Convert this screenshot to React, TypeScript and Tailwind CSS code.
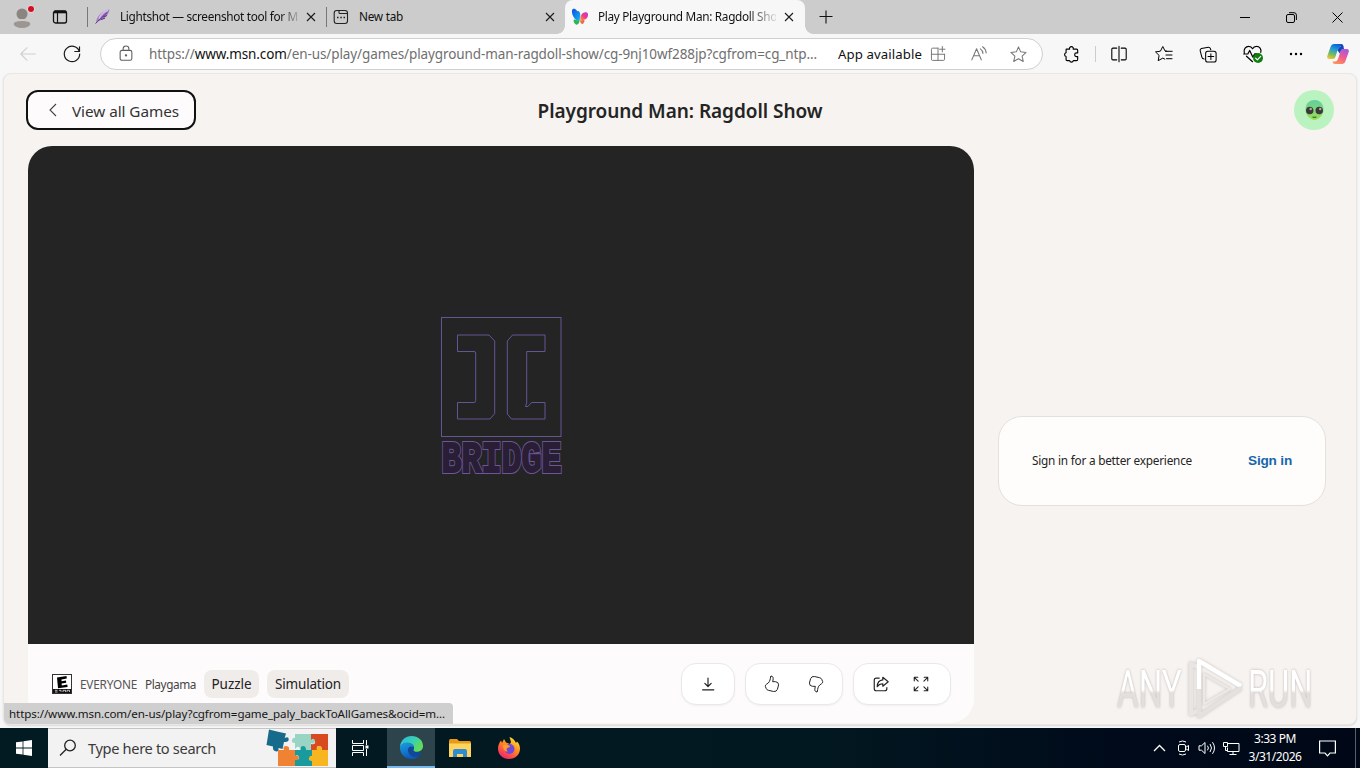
import { useLayoutEffect, useRef, useState } from "react";
import type { ReactNode } from "react";

const UI = "font-['Noto_Sans',sans-serif]";

/* Single-line label whose tracking is tuned so the text spans exactly `w` pixels. */
function Label({ w, className = "", children }: { w: number; className?: string; children: ReactNode }) {
  const ref = useRef<HTMLSpanElement>(null);
  const [spacing, setSpacing] = useState(0);
  useLayoutEffect(() => {
    const el = ref.current;
    if (!el) return;
    const n = (el.textContent || "").length;
    setSpacing((w - el.getBoundingClientRect().width) / n);
  }, [w]);
  return (
    <span ref={ref} className={`inline-block shrink-0 whitespace-pre ${className}`} style={{ letterSpacing: `${spacing}px` }}>
      {children}
    </span>
  );
}

function Slot({ className = "", children }: { className?: string; children: ReactNode }) {
  return <div className={`flex shrink-0 items-center justify-center ${className}`}>{children}</div>;
}

function Ico({ s = 20, className = "", sw = 1, children }: { s?: number; className?: string; sw?: number; children: ReactNode }) {
  return (
    <svg width={s} height={s} viewBox="0 0 20 20" fill="none" stroke="currentColor" strokeWidth={sw} strokeLinecap="round" strokeLinejoin="round" className={`shrink-0 ${className}`}>
      {children}
    </svg>
  );
}

const Close = () => (
  <svg width="10" height="10" viewBox="0 0 10 10" stroke="#1b1b1b" strokeWidth="1.1" className="shrink-0"><path d="M1 1l8 8M9 1L1 9" /></svg>
);

function Butterfly() {
  return (
    <svg width="18" height="18" viewBox="0 0 18 18">
      <defs>
        <linearGradient id="bf1" x1="0" y1="0" x2="1" y2="1"><stop stopColor="#0a4fe0" /><stop offset="1" stopColor="#18b4f4" /></linearGradient>
        <linearGradient id="bf2" x1="1" y1="0" x2="0" y2="1"><stop stopColor="#b43be0" /><stop offset=".5" stopColor="#f0388c" /><stop offset="1" stopColor="#ff9a3c" /></linearGradient>
      </defs>
      <path d="M1 2.500C1.200.8 3 .3 4.500 1.200C5.500 1.800 5.800 2.500 6.200 3.200C8 2.500 9.300 4.500 9.300 7C9.300 9 9 10.500 8.600 12C7 12.800 4.500 12 3.200 10C1.500 7.500.7 4.700 1 2.500z" fill="url(#bf1)" />
      <path d="M3 11.300c2 .9 4 1 5.700.7c-.2 2.500-1.200 4.700-3 4.700S1.800 13.500 3 11.300z" fill="#2fb457" />
      <path d="M9.300 12C9 8.500 10.800 4.500 14.500 4.300c2.800 0 3 2.500 2.100 4.700c-1 2-2.500 2.500-3.300 2.500c-1.300.8-2.700.9-4 .5z" fill="url(#bf2)" />
      <path d="M9.300 12c1.500.6 3 .2 4-.4c.6 1.900-.3 4.300-2 4.300s-2.300-1.900-2-3.900z" fill="#f36b45" />
    </svg>
  );
}

function TabStrip() {
  return (
    <div className="flex h-[34px] w-full items-stretch bg-[#cccccc] text-[#111]">
      <Slot className="w-[44px]">
        <svg width="26" height="28" viewBox="0 0 26 28">
          <circle cx="13" cy="11" r="5.500" fill="#8b8581" />
          <ellipse cx="13" cy="21" rx="8.300" ry="4" fill="#9c9692" />
          <path d="M5 18.500Q13 15.500 21 18.500" stroke="#cccccc" strokeWidth="1.800" fill="none" />
          <circle cx="22" cy="6" r="3.800" fill="#e8d8d8" />
          <circle cx="22" cy="6" r="3" fill="#d01023" />
        </svg>
      </Slot>
      <Slot className="w-[32px]">
        <svg width="16" height="16" viewBox="0 0 16 16" fill="none" stroke="#111"><rect x="1.500" y="2" width="13" height="12" rx="2" strokeWidth="1.300" /><path d="M2 3h12" strokeWidth="2.600" /><path d="M5.500 4v10" strokeWidth="1.200" /></svg>
      </Slot>
      <Slot className="ml-[11px] w-px"><div className="h-5 w-px bg-[#777]" /></Slot>
      <div className="flex w-[238px] items-center pl-[6px]">
        <svg width="18" height="18" viewBox="0 0 18 18">
          <path d="M2 14.500C2.500 9 7 3 15.500 1.500C15 6 11 12 3.500 13z" fill="#a37cc4" />
          <path d="M5 10.500C6.500 7 10 3.500 14 2.500" stroke="#d8bfe8" strokeWidth="1.500" fill="none" />
          <path d="M1.500 15.500L13.500 4.200M7 11.500l4-1.300M9 9l4-1.500" stroke="#5b3587" strokeWidth="1" fill="none" />
        </svg>
        <div className="ml-[8px] flex w-[178px] [mask-image:linear-gradient(to_right,#000_90%,transparent_102%)]">
          <Label w={178} className="text-[11.8px]">Lightshot — screenshot tool for M</Label>
        </div>
        <span className="ml-[8px] flex"><Close /></span>
      </div>
      <Slot className="w-px"><div className="h-5 w-px bg-[#777]" /></Slot>
      <div className="flex w-[238px] items-center pl-[6px]">
        <svg width="16" height="16" viewBox="0 0 16 16" fill="none" stroke="#222" strokeWidth="1.100"><rect x="1.200" y="1.500" width="13.300" height="13" rx="2.500" /><path d="M6 1.500v2.200q0 .8.800.8h7.700" /><path d="M4 8.500h1.500M7.300 8.500h1.500M10.500 8.500h1.500" strokeWidth="1.500" /></svg>
        <Label w={44} className="ml-[10px] text-[11.8px]">New tab</Label>
        <span className="ml-[142px] flex"><Close /></span>
      </div>
      <div className="relative flex w-[240px] items-center rounded-t-[8px] bg-[#f7f7f7] pl-[6px] before:absolute before:bottom-0 before:-left-[8px] before:size-2 before:bg-[radial-gradient(circle_at_0_0,transparent_7.500px,#f7f7f7_8px)] before:content-[''] after:absolute after:-right-[8px] after:bottom-0 after:size-2 after:bg-[radial-gradient(circle_at_100%_0,transparent_7.500px,#f7f7f7_8px)] after:content-['']">
        <Butterfly />
        <div className="ml-[9px] flex w-[178px] [mask-image:linear-gradient(to_right,#000_84%,transparent_102%)]">
          <Label w={179} className="text-[11.8px]">Play Playground Man: Ragdoll Sho</Label>
        </div>
        <span className="ml-[8px] flex"><Close /></span>
      </div>
      <Slot className="ml-px w-[40px]"><svg width="14" height="14" viewBox="0 0 14 14" stroke="#111" strokeWidth="1.100"><path d="M7 .5v13M.5 6.500h13" /></svg></Slot>
      <div className="ml-auto flex">
        <Slot className="w-[46px]"><svg width="10" height="10" stroke="#000"><path d="M0 5.500h10" /></svg></Slot>
        <Slot className="w-[46px]"><svg width="11" height="11" viewBox="0 0 11 11" fill="none" stroke="#000"><rect x=".5" y="2.500" width="8" height="8" rx="1.500" /><path d="M3 .7h5q2.400 0 2.400 2.400V8" /></svg></Slot>
        <Slot className="w-[46px]"><svg width="11" height="11" viewBox="0 0 11 11" stroke="#000"><path d="M.5.5l10 10M10.500.5l-10 10" /></svg></Slot>
      </div>
    </div>
  );
}

function Toolbar() {
  return (
    <div className="flex h-[39px] w-full items-center bg-[#f7f7f7] pt-px text-[#222]">
      <Slot className="ml-[6px] w-[44px]"><Ico s={18} className="text-[#cfcfcf]" sw={1.200}><path d="M18 10H2M9 3L2 10l7 7" /></Ico></Slot>
      <Slot className="w-[44px]"><Ico className="text-[#1b1b1b]" sw={1.200}><path d="M17.200 7.200A7.700 7.700 0 1 0 17.700 10M17.500 2.800v4.700h-4.700" /></Ico></Slot>
      <div className="ml-[6px] flex h-8 w-[943px] items-center rounded-full border border-[#cfcfcf] bg-white">
        <Slot className="w-[50px]"><Ico s={18} className="text-[#5f5f5f]" sw={1.200}><rect x="3.500" y="6" width="13" height="11" rx="2" /><path d="M6.800 6V4.300a3.200 3.200 0 0 1 6.400 0V6" /><circle cx="10" cy="11.500" r=".7" fill="currentColor" /></Ico></Slot>
        <div className="ml-[-2px] flex w-[689px] text-[13.5px] text-[#6f6f6f]">
          <Label w={668}>https://<span className="text-[#111]">www.msn.com</span>/en-us/play/games/playground-man-ragdoll-show/cg-9nj10wf288jp?cgfrom=cg_ntp...</Label>
        </div>
        <Label w={84} className="pt-px text-[13.2px] text-[#111]">App available</Label>
        <Slot className="ml-[5px] w-[22px] text-[#777]"><Ico s={18} sw={1.100}><path d="M10 3.500H4Q2.700 3.500 2.700 4.800v11q0 1.300 1.300 1.300h12q1.300 0 1.300-1.300V10.300M2.700 10.300h14.600M10 3.500v13.600M14.800 1.700v6M11.800 4.700h6" /></Ico></Slot>
        <Slot className="ml-[15px] w-[30px] text-[#777]"><Ico s={18} sw={1.200}><path d="M2 16.500L7.300 4.200 12.600 16.500M3.900 12h6.800" /><path d="M11.500 4.300q2.500 1.600 2.900 5M14 2q3.500 2.300 4 6.800" /></Ico></Slot>
        <Slot className="ml-[9px] w-[30px] text-[#777]"><Ico s={19} sw={1.100}><path d="M10 2l2.300 5.200 5.700.6-4.200 3.900 1.200 5.600-5-2.900-5 2.900 1.200-5.600L2 7.800l5.700-.6z" /></Ico></Slot>
      </div>
      <Slot className="ml-[8px] w-[40px]"><Ico s={19} className="text-black" sw={1.200}><path d="M4.800 4.300h3.200a2 2 0 1 1 3.800 0h3.500q1.200 0 1.200 1.200v2.800h-1.200a1.900 1.900 0 0 0 0 3.900h1.200v3.100q0 1.200-1.200 1.200h-3.400a2 2 0 0 1-3.900 0H5.500q-1.200 0-1.200-1.200v-3.200a2 2 0 0 1 0-3.900V5q0-.7.500-.7z" /></Ico></Slot>
      <div className="ml-[4px] h-4 w-px bg-[#ccc]" />
      <Slot className="ml-[1px] w-[44px]"><Ico s={18} className="text-black" sw={1.200}><path d="M7.500 3.500H3.200Q2 3.500 2 4.700v10.600q0 1.200 1.200 1.200h4.300M12.500 3.500h4.300Q18 3.500 18 4.700v10.600q0 1.200-1.200 1.200h-4.300M10 1.500v17" /></Ico></Slot>
      <Slot className="ml-px w-[44px]"><Ico s={20} className="text-black" sw={1}><path d="M12.800 7.200L11 6.900 8.800 2.500 6.400 7.200 1.500 7.900l3.600 3.500-.9 5.300 4.600-2.600 2 1M11.500 7.300h6.700M12 11h6M12.500 14.700h5.500" /></Ico></Slot>
      <Slot className="w-[44px]"><Ico s={19} className="text-black" sw={1.100}><path d="M5.500 14.700Q3.500 14.700 3 12.800L1.200 6Q1 4.300 2.600 3.800L9.900 2.300Q11.500 2.200 12 3.800L12.400 5" /><rect x="7" y="6.500" width="11" height="11.500" rx="2.200" /><path d="M12.500 9.200v6M9.500 12.200h6" /></Ico></Slot>
      <Slot className="w-[44px]"><Ico s={22} className="text-black" sw={1.100}><path d="M3 9.200C2 5.500 4.500 3 7.200 3.100Q9.300 3.100 10.500 5.200 11.700 3.100 14 3.100C16.800 3 18.800 5.500 18 8.500M2.500 10h3.700l1.700-3.200 2.800 6 1.800-3h2M5 12l5.500 5" /><circle cx="15.500" cy="13.700" r="4.500" fill="#107c10" stroke="none" /><path d="M13.300 13.800l1.600 1.600 3-3.200" stroke="#fff" /></Ico></Slot>
      <Slot className="w-[44px]"><svg width="14" height="4"><circle cx="2" cy="2" r="1.200" /><circle cx="7" cy="2" r="1.200" /><circle cx="12" cy="2" r="1.200" /></svg></Slot>
      <Slot className="w-[40px]">
        <svg width="24" height="22" viewBox="0 0 24 22">
          <defs>
            <linearGradient id="cp1" x1=".6" y1="0" x2=".2" y2="1"><stop stopColor="#0b5fd6" /><stop offset=".35" stopColor="#1f9ade" /><stop offset=".65" stopColor="#66b86a" /><stop offset="1" stopColor="#f4c430" /></linearGradient>
            <linearGradient id="cp2" x1=".8" y1="0" x2=".3" y2="1"><stop stopColor="#a457e8" /><stop offset=".5" stopColor="#ee5a92" /><stop offset="1" stopColor="#ff9257" /></linearGradient>
          </defs>
          <path d="M15 1H8Q5.500 1 4.500 4L1.300 13Q.5 16 3.500 16H7q1.800 0 2.500-2.500L12 6q1-2.500 3-2.500h2.500Q17 1 15 1z" fill="url(#cp1)" />
          <path d="M9 21h7q2.500 0 3.500-3l3.200-9q.8-3-2.200-3H17q-1.800 0-2.500 2.500L12 16q-1 2.500-3 2.500H6.500Q7 21 9 21z" fill="url(#cp2)" />
          <path d="M15 1q1.900.1 2.400 2l.6 3H17q-1.800 0-2.500 2.500L13.800 10.500 11.600 7.500 12 6q1-2.500 3-2.500z" fill="#1845b8" />
        </svg>
      </Slot>
    </div>
  );
}

function BridgeLogo() {
  return (
    <svg width="126" height="162" viewBox="438 315 126 162" fill="none" stroke="#665596" strokeWidth="1" className="overflow-visible">
      <rect x="441.500" y="317.500" width="119.500" height="119" />
      <path d="M457.500 335H489L494.700 341V413.500L490 419H457.500V402.500H474Q475.700 402.500 475.700 400.500V353Q475.700 351.500 474 351.500H457.500Z" />
      <path d="M545 335H512.500L507.300 341V414L511.500 419H545V402.500H531.500L528 406.500H525.500L526.700 403V351.500H545Z" />
      <text x="441.500" y="471.500" textLength="120" lengthAdjust="spacingAndGlyphs" fontFamily="'Liberation Mono', monospace" fontWeight="700" fontSize="44" stroke="#6d5699" strokeWidth="4" strokeLinejoin="miter">BRIDGE</text>
      <text x="441.500" y="471.500" textLength="120" lengthAdjust="spacingAndGlyphs" fontFamily="'Liberation Mono', monospace" fontWeight="700" fontSize="44" fill="#291e35" stroke="#291e35" strokeWidth="2" aria-hidden="true">BRIDGE</text>
    </svg>
  );
}

function Alien() {
  return (
    <Slot className="size-10 rounded-full bg-[#baf3bf]">
      <svg width="21" height="22" viewBox="0 0 22 22">
        <defs><linearGradient id="al" x1="0" y1="0" x2="0" y2="1"><stop stopColor="#5fd0a0" /><stop offset="1" stopColor="#9fdc55" /></linearGradient></defs>
        <path d="M11 .5C5 .5 1.500 5 1.500 10.500S6.500 21.500 11 21.500s9.500-5.500 9.500-11S17 .5 11 .5z" fill="url(#al)" />
        <ellipse cx="6" cy="11.500" rx="3.900" ry="4" fill="#3c3a38" /><ellipse cx="16" cy="11.500" rx="3.900" ry="4" fill="#3c3a38" />
        <circle cx="7" cy="10" r="1.300" fill="#b5a7a8" /><circle cx="17" cy="10" r="1.300" fill="#b5a7a8" />
        <path d="M9 18q2 1.500 4 0" stroke="#397a20" strokeWidth="1.300" fill="none" />
      </svg>
    </Slot>
  );
}

function Watermark() {
  return (
    <div className="absolute top-[657px] left-[1117px] flex h-[64px] w-[198px] items-center font-[Roboto,sans-serif]">
      <div className="h-[60px] w-[67px]"><span className="inline-block origin-left scale-x-[.65] bg-[linear-gradient(#fff_50%,#e3dfdd_55%)] bg-clip-text text-[51px] leading-[62px] text-transparent [filter:drop-shadow(0_0_1.500px_#bbb6b3)]">ANY</span></div>
      <svg width="62" height="64" viewBox="0 0 60 64" fill="none" strokeWidth="4.500" strokeLinejoin="round" className="shrink-0 [filter:drop-shadow(0_0_1.500px_#c4bfbc)]">
        <path d="M13 10L6 7v50l8-4" stroke="#e9e5e3" />
        <path d="M14 32V4L56 29" stroke="#fff" />
        <path d="M14 32V59L56 31" stroke="#e5e1df" />
        <path d="M19 17L45 32 19 47z" stroke="#ece8e6" strokeWidth="2.500" />
      </svg>
      <div className="h-[60px] w-[66px]"><span className="ml-[2px] inline-block origin-left scale-x-[.64] bg-[linear-gradient(#fff_50%,#e3dfdd_55%)] bg-clip-text text-[51px] leading-[62px] text-transparent [filter:drop-shadow(0_0_1.500px_#bbb6b3)]">RUN</span></div>
    </div>
  );
}

const thumb = "M8.800 1.500C9.800.8 11.200 1.600 11.300 3.600C11.400 5 11 6 10.700 7.400H13.700Q17.400 7.600 17.300 11L16 16Q15 18.800 11.700 18.300L6 17Q4.300 16.600 3.700 15.300L2.600 12.700Q2.200 11.200 3.900 10.300C6.800 8.700 7.900 6.400 8.200 3.600Q8.300 2 8.800 1.500z";
const pill = "flex h-[42px] items-center justify-center rounded-[15px] border border-[#ece8e8] bg-white text-[#222] shadow-[0_1px_2px_#0000000d]";

function Page() {
  return (
    <main className="flex h-[652px] w-[1354px] flex-col overflow-hidden rounded-[8px] border border-[#e9e6e4] bg-[#f7f3f0] shadow-[0_1px_2px_#00000020]">
      <header className="mt-[16px] flex h-10 shrink-0 items-center justify-between pr-[22px] pl-[22px]">
        <div className="flex-1"><button className="flex h-10 w-[170px] items-center rounded-[12px] border-2 border-[#111] bg-[#fefbfc] pl-[19px] text-[#333]">
          <svg width="12" height="14" viewBox="0 0 12 14" fill="none" stroke="#444" strokeWidth="1.100"><path d="M9 1L3 7l6 6" /></svg>
          <Label w={107} className="ml-[13px] pt-[2px] text-[15.300px]">View all Games</Label>
        </button></div>
        <Label w={285} className="pt-[2px] text-[19px] font-semibold text-[#242424]">Playground Man: Ragdoll Show</Label>
        <div className="flex flex-1 justify-end"><Alien /></div>
      </header>
      <div className="mt-[16px] flex gap-[24px] pl-[24px]">
        <section className="flex h-[577px] w-[946px] shrink-0 flex-col overflow-hidden rounded-[24px] bg-[#fefbfc]">
          <div className="flex h-[498px] justify-center bg-[#242424] pt-[169px]"><BridgeLogo /></div>
          <div className="flex h-[79px] items-center px-[23px]">
            <svg width="20" height="20" viewBox="0 0 20 20" className="ml-[1px]"><rect x=".5" y=".5" width="19" height="19" fill="#fff" stroke="#333" /><path d="M5 3.500L14.500 2l.3 2.500-5.300 1v1.800l4.500-.8.200 2.200-4.600.9.200 1.900 5.500-1 .3 2.600-9.600 1.200z" fill="#000" /><path d="M1 15h18v4H1z" fill="#111" /><path d="M3 16.300h2.500M3 18h2.500M7 16.300h2v1.500M11 18v-1.700h2.500V18M15 18v-1.700h2.500V18" stroke="#fff" strokeWidth=".7" fill="none" /></svg>
            <Label w={57} className="ml-[8px] pt-[2px] text-[11.800px] text-[#555]">EVERYONE</Label>
            <Label w={51} className="ml-[8px] pt-[2px] text-[11.800px] text-[#444]">Playgama</Label>
            <div className="ml-[8px] flex h-[28px] w-[55px] items-center justify-center rounded-[8px] bg-[#f0ecea] pt-px text-[#222]"><Label w={40} className="text-[13.500px]">Puzzle</Label></div>
            <div className="ml-[8px] flex h-[28px] w-[82px] items-center justify-center rounded-[8px] bg-[#f0ecea] pt-px text-[#222]"><Label w={66} className="text-[13.500px]">Simulation</Label></div>
            <div className="ml-auto flex gap-[10px]">
              <div className={`${pill} w-[54px]`}><Ico s={18} sw={1.300}><path d="M10 3.500v9M6.500 9.300l3.500 3.500 3.500-3.500M4 16.500h12.500" /></Ico></div>
              <div className={`${pill} w-[98px] gap-[26px]`}><Ico s={18} sw={1.100}><path d={thumb} /></Ico><Ico s={18} sw={1.100}><path d={thumb} transform="rotate(180 10 10)" /></Ico></div>
              <div className={`${pill} w-[98px] gap-[22px] pr-[2px]`}><Ico s={18} sw={1.300}><path d="M8 3.500H4.700Q2.500 3.500 2.500 5.700v9.600q0 2.200 2.200 2.200h9.600q2.200 0 2.200-2.200V14" /><path d="M12 2.500l6 5-6 5V9.700Q8 9.800 5.800 13 6 6 12 5.500z" /></Ico><Ico s={18} sw={1.200}><path d="M2.500 6.500v-4h4M2.800 2.800l4 4M13.500 2.500h4v4M17.200 2.800l-4 4M2.500 13.500v4h4M2.800 17.200l4-4M13.500 17.500h4v-4M17.200 17.200l-4-4" /></Ico></div>
            </div>
          </div>
        </section>
        <aside className="mt-[270px] flex h-[90px] w-[328px] items-center justify-between rounded-[24px] border border-[#e4e0dd] bg-[#fffdfb] px-[33px]">
          <Label w={160} className="text-[11.800px] text-[#242424]">Sign in for a better experience</Label>
          <Label w={44} className="font-['Liberation_Sans',sans-serif] text-[13.600px] font-bold text-[#1667ad]">Sign in</Label>
        </aside>
      </div>
    </main>
  );
}

function Puzzle() {
  return (
    <svg width="64" height="38" viewBox="0 0 64 38">
      <path d="M3 .5L11 2.500 20 4.500 18.700 9q4-2 4 1.300t-4.700 2.700L16.500 20l-4-1q.5 4-2.800 3.300T7 17.600L.5 16z" fill="#166b8b" />
      <path d="M29 5h16v5q4-2 4 2t-4 2v7H34q0-4-3-3l-2 2v-6q-4 0-3-3t3-2z" fill="#98d5c5" />
      <path d="M45 5h17v16h-6q0-4-3-4t-2 4h-6v-6q5 1 4-3t-4-1z" fill="#d84b21" />
      <path d="M12 21h6q-2-4 2-4t3 4h6v6q4-1 4 2t-4 2v6H12z" fill="#f08333" />
      <path d="M29 21h6q-1-4 2-4t3 4h6v6q4 0 3 3t-3 2v5H29v-6q5 0 4-3t-4-1z" fill="#199a9c" />
      <path d="M46 21h5q-1-4 2-4t3 4h6v16H46v-5q-4 0-3-3t3-2z" fill="#f7b51f" />
    </svg>
  );
}

function Taskbar() {
  return (
    <footer className="flex h-10 w-full items-stretch bg-[linear-gradient(90deg,#021a22_0%,#021820_60%,#000a1a_82%,#000817_100%)] text-white">
      <Slot className="w-[48px]"><svg width="16" height="16" viewBox="0 0 16 16" fill="#fff"><path d="M0 2.300l6.600-.9v6.200H0zM7.400 1.300L16 0v7.600H7.400zM0 8.400h6.600v6.200L0 13.700zM7.400 8.400H16V16l-8.600-1.300z" /></svg></Slot>
      <div className="flex w-[288px] items-center border-y border-[#c4c4c4] bg-[#f2f2f2]">
        <svg width="18" height="18" viewBox="0 0 18 18" fill="none" stroke="#222" strokeWidth="1.300" className="ml-[11px]"><circle cx="11" cy="6.500" r="5.300" /><path d="M7.200 10.300L1 16.500" /></svg>
        <Label w={128} className="ml-[11px] pt-px text-[14.600px] text-[#3b3b3b]">Type here to search</Label>
        <span className="ml-[50px] flex"><Puzzle /></span>
      </div>
      <Slot className="w-[48px]"><svg width="17" height="16" viewBox="0 0 17 16" fill="none" stroke="#fff"><path d="M.5 0v3.500h11V0M.5 16v-3.500h11V16M.5 5.500h11v5H.5zM14.500 0v5M14.500 9v7" /><rect x="13.500" y="5.500" width="3" height="3" fill="#fff" stroke="none" /></svg></Slot>
      <div className="ml-[3px] flex w-[48px] items-center justify-center border-b-2 border-[#76b9ed] bg-[#2d444c] pt-px">
        <svg width="25" height="25" viewBox="0 0 26 26">
          <defs>
            <linearGradient id="e1" x1="0" y1="0" x2="1" y2=".5"><stop stopColor="#29b8e8" /><stop offset=".6" stopColor="#3bd0b0" /><stop offset="1" stopColor="#64dc55" /></linearGradient>
            <linearGradient id="e2" x1="0" y1="0" x2=".5" y2="1"><stop stopColor="#1aa0e4" /><stop offset="1" stopColor="#0b56b8" /></linearGradient>
          </defs>
          <path d="M1 13C1 5.500 7 1 13 1c7 0 12 4.500 12 10.500c0 4-3 6-6.500 6c-3 0-4-1.200-3.500-2.200C17 12 14 8 9 8C5 8 2 10 1 13z" fill="url(#e1)" />
          <path d="M1 13C2 9.500 5.500 8 9 8c4 0 6.500 2.300 6.600 5C11 10.500 8.500 14 10 18c1.500 4.500 7 6 12 3C19 24 16 25 13 25C6 25 1 19.500 1 13z" fill="url(#e2)" />
          <path d="M10 18c-1.500-4 1-7.500 5.600-5c-.3 1.500-1 1.800-.6 2.800c1 2.500 5.500 2.200 8 .9c1 1-.5 3.300-1 4.300c-5 3-10.500 1.500-12-3z" fill="#10499b" />
        </svg>
      </div>
      <Slot className="w-[49px]"><svg width="22" height="19" viewBox="0 0 22 19"><path d="M0 2Q0 0 1.500 0H8l2 2h10.500Q22 2 22 3.500V6H0z" fill="#e99b18" /><path d="M0 4.500h22V18H0z" fill="#ffd45e" /><path d="M4 18v-6q0-2 2-2h10q2 0 2 2v6h-4v-3H8v3z" fill="#318bd0" /></svg></Slot>
      <Slot className="w-[49px]">
        <svg width="24" height="24" viewBox="0 0 24 24">
          <defs>
            <linearGradient id="f1" x1=".8" y1="0" x2=".2" y2="1"><stop stopColor="#ffe83d" /><stop offset=".4" stopColor="#ff9322" /><stop offset=".8" stopColor="#fb3f51" /><stop offset="1" stopColor="#e32385" /></linearGradient>
          </defs>
          <path d="M12 23C5.500 23 1 18.500 1 12.500C1 9 2.500 6.500 4 4.500L5 7l2-4 2 3.500L13 8l1-2-1.500-5C16 2 18 4.500 19 7l1-1.500c2 2 3 4.500 3 7C23 18.500 18.500 23 12 23z" fill="url(#f1)" />
          <circle cx="12.500" cy="13" r="5" fill="#7148d8" />
          <path d="M6 9.500c2-1.500 4-1 6 0c1.500.5 1.500 1.500-.5 2C9 12 9 14 11 15.500C8 16 6 13.500 6 9.500z" fill="#ff9b28" />
        </svg>
      </Slot>
      <div className="ml-auto flex items-stretch">
        <Slot className="w-[24px]"><svg width="13" height="8" fill="none" stroke="#fff" strokeWidth="1.300"><path d="M1 7l5.500-5.500L12 7" /></svg></Slot>
        <Slot className="w-[24px]"><svg width="14" height="16" viewBox="0 0 14 16" fill="none" stroke="#fff"><rect x="2.500" y="4.500" width="7" height="7" rx="1.500" /><path d="M9.500 7.500l3-2v5l-3-2M3 2q3.500-2 7 0M3 14q3.500 2 7 0" /></svg></Slot>
        <Slot className="w-[24px]"><svg width="18" height="14" viewBox="0 0 18 14" fill="none" stroke="#fff"><path d="M1 4.800h2.500L7 1.500v11L3.500 9.200H1zM9.500 4.700q1.800 2.300 0 4.600M12 3q3 4 0 8M14.500 1.200q4 5.800 0 11.600" /></svg></Slot>
        <Slot className="w-[24px]"><svg width="17" height="15" viewBox="0 0 17 15" fill="none" stroke="#fff"><path d="M5 2.500h11v8H4.500V6.500M10 10.500v3M6.500 13.500h7M.5 1.500h4v4h-4zM2.500 5.500v4h2" /></svg></Slot>
        <div className="flex w-[64px] flex-col items-center justify-center text-[12px] leading-[18px]">
          <Label w={42}>3:33 PM</Label>
          <Label w={53}>3/31/2026</Label>
        </div>
        <Slot className="w-[40px]"><svg width="17" height="17" viewBox="0 0 17 17" fill="none" stroke="#fff" strokeWidth="1.200"><path d="M.6 1h15.800v12H11l-2.500 2.800L6 13H.6z" /></svg></Slot>
        <div className="ml-[8px] w-[5px] border-l border-[#59616b]" />
      </div>
    </footer>
  );
}

export default function App() {
  return (
    <div className={`relative flex h-[768px] w-[1360px] flex-col overflow-hidden bg-[#f7f7f7] leading-normal ${UI}`}>
      <TabStrip />
      <Toolbar />
      <div className="flex h-[655px] justify-center"><Page /></div>
      <Taskbar />
      <div className="absolute top-[703px] left-[4px] flex h-[21px] w-[449px] items-center rounded-tr-[4px] rounded-bl-[6px] bg-[#cfcfcf] pt-px pl-[5px] text-[11.600px] text-[#161616]">
        <Label w={436}>https://www.msn.com/en-us/play?cgfrom=game_paly_backToAllGames&amp;ocid=m...</Label>
      </div>
      <Watermark />
    </div>
  );
}
